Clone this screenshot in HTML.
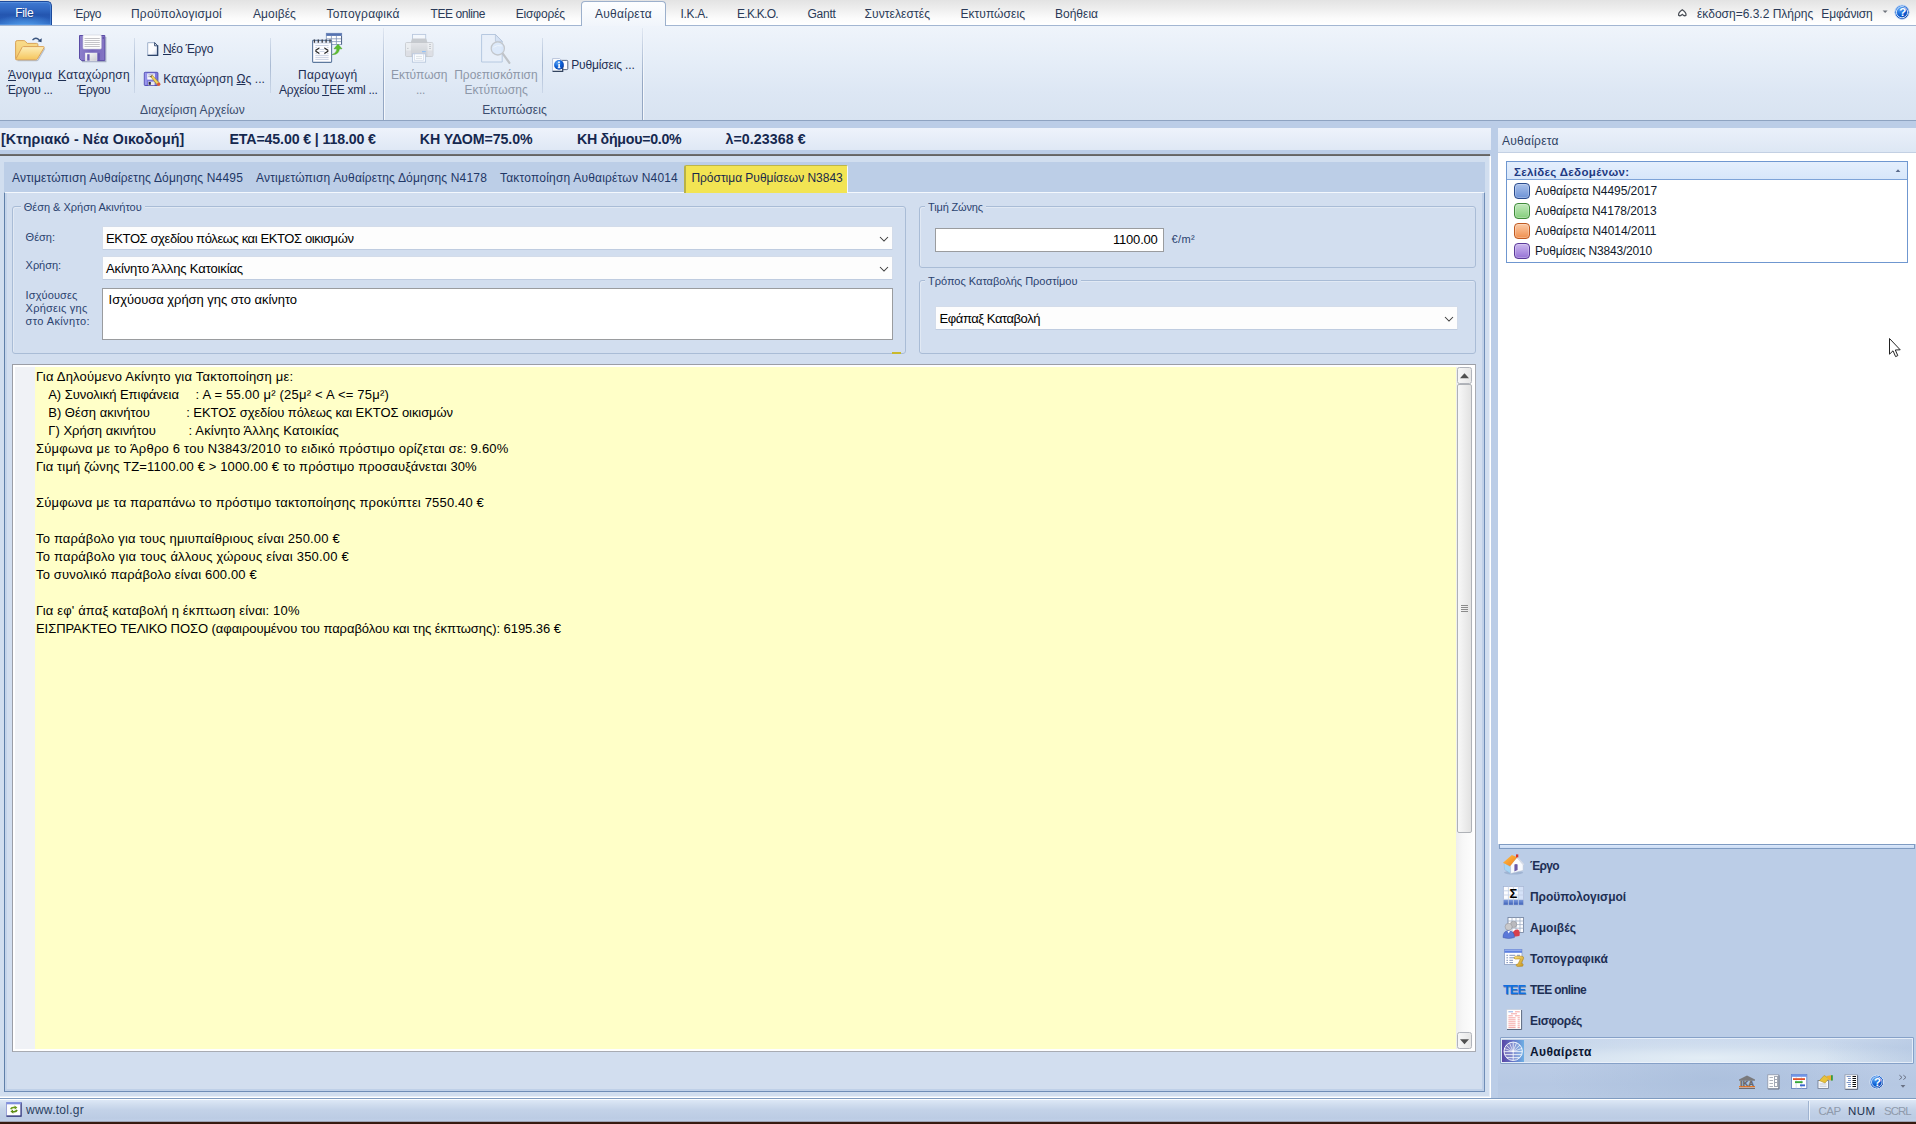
<!DOCTYPE html>
<html lang="el"><head><meta charset="utf-8"><title>Αυθαίρετα</title>
<style>
html,body{margin:0;padding:0;}
body{width:1916px;height:1124px;position:relative;overflow:hidden;background:#bbcde7;font-family:"Liberation Sans",sans-serif;}
.a{position:absolute;box-sizing:border-box;}
.t{position:absolute;white-space:pre;line-height:1;font-family:"Liberation Sans",sans-serif;}
.t u{text-decoration:underline;text-underline-offset:1px;}
svg{position:absolute;overflow:visible;}
/* top tab bar */
#tabbar{left:0;top:0;width:1916px;height:25px;background:linear-gradient(#e3e3e3 0,#ededed 8px,#fbfbfb 18px,#ffffff 24px);}
#filetab{left:-2px;top:1px;width:54px;height:24px;border-radius:0 5px 0 0;border:1px solid #1c4a9c;border-bottom:none;background:radial-gradient(ellipse 70% 60% at 50% 115%,#5aaaf4 0,rgba(90,170,244,0) 100%),linear-gradient(#3f7ad2 0,#2f66c0 35%,#2456b0 55%,#2a62be 100%);box-shadow:inset 0 0 0 1px rgba(110,165,235,.5);}
#acttab{left:581px;top:1px;width:85px;height:25px;border:1px solid #9cb0cc;border-bottom:none;border-radius:4px 4px 0 0;
 background:linear-gradient(#fdfeff,#f1f5fb);}
/* ribbon */
#ribbon{left:0;top:25px;width:1916px;height:96px;border-top:1px solid #a3b6d2;border-bottom:1px solid #8ea3c1;
 background:linear-gradient(#eff4fb 0,#e6eef8 35%,#dde7f4 70%,#d8e3f1 100%);}
.vsep{width:1px;top:38px;height:55px;background:linear-gradient(rgba(160,178,205,.3),#a9bad3 50%,rgba(160,178,205,.3));}
.gsep{width:2px;top:28px;height:92px;background:linear-gradient(90deg,rgba(140,160,190,.9) 0,rgba(140,160,190,.9) 1px,rgba(255,255,255,.7) 1px);
 -webkit-mask-image:linear-gradient(rgba(0,0,0,.15),#000 60%);mask-image:linear-gradient(rgba(0,0,0,.15),#000 60%);}
#strip1{left:0;top:121px;width:1916px;height:7px;background:#bbcde7;}
/* info bar */
#info{left:0;top:128px;width:1491px;height:22px;background:linear-gradient(#eef3fb,#dfe8f5);}
#infoline{left:0;top:154px;width:1490px;height:2px;background:linear-gradient(#727272,#5f5f5f);}
#mainbg{left:0;top:156px;width:1491px;height:942px;background:#d1deef;border-right:1px solid #fff;border-bottom:1px solid #fff;box-shadow:inset -1px -1px 0 #e6edf7;}
#tabstrip{left:4px;top:162px;width:1481px;height:30px;background:#bccee7;}
#page{left:4px;top:192px;width:1481px;height:900px;background:#d2deef;border:1px solid #6f8db6;border-left-color:#5f7fa8;border-top:1px solid #f4f8fd;box-shadow:inset -2px -2px 0 #bfd0e8,inset 2px 0 0 #c4d4ea;}
#ytab{left:684px;top:165px;width:164px;height:28px;border-top:1px solid #bdb548;border-left:2px solid #b9b246;border-right:1px solid #f6f8fc;border-radius:2px 2px 0 0;background:#f2e453;}
.gb{border:1px solid #a9bcd6;border-radius:3px;box-shadow:inset 1px 1px 0 rgba(255,255,255,.35);}
.gbt{height:12px;background:#d2deef;}
.combo{background:#fdfdfd;border:1px solid #d3dcea;border-bottom-color:#bfcce0;border-radius:1px;}
.edit{background:#fff;border:1px solid #9a9c9f;}
#memo{left:12px;top:364px;width:1464px;height:688px;background:#fff;border:1px solid #9b9ea6;border-right-color:#a8abb2;border-bottom-color:#a8abb2;}
#memoin{left:35px;top:367px;width:1421px;height:682px;background:#ffffc8;}
#gutter{left:15px;top:367px;width:20px;height:682px;background:#f0f2f6;}
#vsb{left:1456px;top:367px;width:17px;height:682px;background:linear-gradient(90deg,#eeeeee,#f7f7f7 40%,#fdfdfd);}
.sbb{left:1457px;width:15px;height:17px;border:1px solid #b1b4bb;border-radius:2.5px;background:linear-gradient(90deg,#f7f7f7,#efefef 50%,#e6e6e6);}
#thumb{left:1457px;top:384px;width:15px;height:449px;border:1px solid #aeb1b6;border-radius:2px;background:linear-gradient(90deg,#f8f8f8,#e2e2e2);}
/* right panel */
#rhead{left:1498px;top:128px;width:418px;height:25px;background:linear-gradient(#eaf0fa,#dde7f4);border-bottom:1px solid #c3d0e3;}
#rwhite{left:1498px;top:153px;width:418px;height:691px;background:#fff;}
#lbox{left:1506px;top:161px;width:402px;height:102px;border:1px solid #6f97d0;background:#fff;}
#lhead{left:1507px;top:162px;width:400px;height:18px;background:linear-gradient(#e4effd,#d7e6fa);border-bottom:1px solid #7da3d8;}
.chip{width:16px;height:16px;border-radius:4px;left:1514px;border:1px solid;box-shadow:inset 0 0 0 1px rgba(255,255,255,.25);}
#split{left:1499px;top:844px;width:416px;height:5px;background:linear-gradient(#dbe8fb,#cbdcf4);border:1px solid #7f9bc2;}
#navsel{left:1500px;top:1037px;width:414px;height:27px;border:1px solid #86a1c8;border-radius:1px;background:linear-gradient(90deg,rgba(176,196,224,.55),rgba(176,196,224,0) 22%,rgba(176,196,224,0) 78%,rgba(176,196,224,.55)),radial-gradient(ellipse 55% 80% at 50% 80%,rgba(228,238,246,.95),rgba(228,238,246,0)),linear-gradient(#ccdaee 0,#c3d3e9 40%,#cbdaec 70%,#d3e0ef 100%);box-shadow:inset 0 0 0 1px rgba(236,243,251,.8);}
/* status bar */
#status{left:0;top:1098px;width:1916px;height:24px;background:linear-gradient(#fbfdff 0,#fbfdff 1px,#dde8f6 1px,#cfdcee 6px,#c3d2e8 11px,#bccce4 19px,#c2d2ea 23px);border-top:1px solid #7f9bc0;}
#darkbot{left:0;top:1121px;width:1916px;height:3px;background:linear-gradient(rgba(58,30,20,.25) 0,rgba(58,30,20,.25) 1px,#3a1e14 1px,#33180e 3px);}

</style></head><body>
<div class="a" id="tabbar"></div>
<div class="a" id="ribbon"></div>
<div class="a" id="filetab"></div>
<div class="a" id="acttab"></div>
<div class="a vsep" style="left:134px"></div>
<div class="a vsep" style="left:270px"></div>
<div class="a vsep" style="left:542px"></div>
<div class="a gsep" style="left:383px"></div>
<div class="a gsep" style="left:642px"></div>
<div class="a" id="strip1"></div>
<div class="a" id="info"></div>
<div class="a" id="infoline"></div>
<div class="a" id="mainbg"></div>
<div class="a" id="tabstrip"></div>
<div class="a" id="page"></div>
<div class="a" id="ytab"></div>
<!-- group boxes -->
<div class="a gb" style="left:12px;top:206px;width:894px;height:148px"></div>
<div class="a gbt" style="left:21px;top:201px;width:124px"></div>
<div class="a gb" style="left:919px;top:206px;width:557px;height:62px"></div>
<div class="a gbt" style="left:925px;top:201px;width:61px"></div>
<div class="a gb" style="left:919px;top:280px;width:557px;height:74px"></div>
<div class="a gbt" style="left:925px;top:275px;width:156px"></div>
<div class="a" style="left:892px;top:352px;width:9px;height:2px;background:#c9b92e"></div>
<!-- inputs -->
<div class="a combo" style="left:102px;top:226px;width:791px;height:24px"></div>
<div class="a combo" style="left:102px;top:256px;width:791px;height:24px"></div>
<div class="a edit" style="left:102px;top:288px;width:791px;height:52px"></div>
<div class="a edit" style="left:935px;top:228px;width:229px;height:24px"></div>
<div class="a combo" style="left:935px;top:306px;width:523px;height:24px"></div>
<svg style="left:879px;top:236px" width="10" height="7"><path d="M1 1 L5 5 L9 1" fill="none" stroke="#3a3a3a" stroke-width="1.05"/></svg>
<svg style="left:879px;top:266px" width="10" height="7"><path d="M1 1 L5 5 L9 1" fill="none" stroke="#3a3a3a" stroke-width="1.05"/></svg>
<svg style="left:1444px;top:316px" width="10" height="7"><path d="M1 1 L5 5 L9 1" fill="none" stroke="#3a3a3a" stroke-width="1.05"/></svg>
<!-- memo -->
<div class="a" id="memo"></div>
<div class="a" id="memoin"></div>
<div class="a" id="gutter"></div>
<div class="a" id="vsb"></div>
<div class="a sbb" style="top:367px"></div>
<div class="a" id="thumb"></div>
<div class="a sbb" style="top:1032px"></div>
<svg style="left:1460px;top:373px" width="9" height="6"><path d="M0 5.2 L4.5 0.2 L9 5.2Z" fill="#505050"/></svg>
<svg style="left:1460px;top:1039px" width="9" height="6"><path d="M0 0.2 L4.5 5.2 L9 0.2Z" fill="#505050"/></svg>
<svg style="left:1461px;top:604px" width="7" height="9"><path d="M0 1.5H7M0 3.5H7M0 5.5H7M0 7.5H7" stroke="#8b8b8b" stroke-width="1"/></svg>
<!-- right panel -->
<div class="a" id="rhead"></div>
<div class="a" id="rwhite"></div>
<div class="a" id="lbox"></div>
<div class="a" id="lhead"></div>
<div class="a chip" style="top:183px;border-color:#2b4c8e;background:linear-gradient(#a9c0ea,#6e93d6)"></div>
<div class="a chip" style="top:203px;border-color:#3f8a3a;background:linear-gradient(#c1e8bb,#86cf7d)"></div>
<div class="a chip" style="top:223px;border-color:#bf5a22;background:linear-gradient(#fbc9a4,#f09050)"></div>
<div class="a chip" style="top:243px;border-color:#5a3a9a;background:linear-gradient(#cbb7ee,#9773d6)"></div>
<div class="a" id="split"></div>
<div class="a" style="left:1498px;top:1064px;width:418px;height:34px;background:radial-gradient(ellipse 40% 130% at 52% 45%,rgba(168,189,219,.7),rgba(168,189,219,0)),linear-gradient(#bbcce6,#b6c8e3 60%,#b8cae4)"></div>
<div class="a" id="navsel"></div>
<!-- status bar -->
<div class="a" id="status"></div>
<div class="a" style="left:1808px;top:1101px;width:2px;height:19px;background:linear-gradient(90deg,#9fb3d0 50%,#eaf1fa 50%)"></div>
<div class="a" id="darkbot"></div>
<svg style="left:0;top:0" width="1916" height="1124" viewBox="0 0 1916 1124">
<defs>
<linearGradient id="gFold" x1="0" y1="0" x2="0" y2="1"><stop offset="0" stop-color="#fdeeb8"/><stop offset="1" stop-color="#f5c55c"/></linearGradient>
<linearGradient id="gFoldB" x1="0" y1="0" x2="0" y2="1"><stop offset="0" stop-color="#f9dc8c"/><stop offset="1" stop-color="#f3c96a"/></linearGradient>
<linearGradient id="gFlop" x1="0" y1="0" x2="1" y2="0"><stop offset="0" stop-color="#8d80cc"/><stop offset=".5" stop-color="#7666bb"/><stop offset="1" stop-color="#8475c4"/></linearGradient>
<linearGradient id="gSilver" x1="0" y1="0" x2="1" y2="1"><stop offset="0" stop-color="#fff"/><stop offset="1" stop-color="#c9c9cf"/></linearGradient>
<linearGradient id="gDoc" x1="0" y1="0" x2="1" y2="1"><stop offset="0" stop-color="#fff"/><stop offset=".6" stop-color="#fbfcff"/><stop offset="1" stop-color="#c6d0e6"/></linearGradient>
<radialGradient id="gBall" cx=".35" cy=".3" r=".8"><stop offset="0" stop-color="#5aa2f2"/><stop offset=".5" stop-color="#0c5fd6"/><stop offset="1" stop-color="#0a3c9e"/></radialGradient>
<linearGradient id="gPrn" x1="0" y1="0" x2="0" y2="1"><stop offset="0" stop-color="#e4e6e9"/><stop offset="1" stop-color="#c9ccd1"/></linearGradient>
<linearGradient id="gGlobe" x1="0" y1="0" x2="1" y2="0"><stop offset="0" stop-color="#5a47a6"/><stop offset=".5" stop-color="#6373c6"/><stop offset="1" stop-color="#6fb0e4"/></linearGradient>
<linearGradient id="gRoof" x1="0" y1="0" x2="1" y2="1"><stop offset="0" stop-color="#ffc34a"/><stop offset="1" stop-color="#f07c18"/></linearGradient>
<linearGradient id="gBlueRow" x1="0" y1="0" x2="0" y2="1"><stop offset="0" stop-color="#7c9ade"/><stop offset="1" stop-color="#3f62b8"/></linearGradient>
<linearGradient id="gGold" x1="0" y1="0" x2="1" y2="1"><stop offset="0" stop-color="#fbe27a"/><stop offset="1" stop-color="#c9961e"/></linearGradient>
</defs>

<!-- open folder -->
<g>
<path d="M17.5 60.7 H36.4 Q37.6 60.7 38.2 59.7 L44.8 48.4" fill="none" stroke="#5a6a88" stroke-opacity=".35" stroke-width="1.2"/>
<path d="M15.6 58.2 V42.2 Q15.6 40.6 17.2 40.6 H23.8 Q24.8 40.6 25.5 41.4 L27.2 43.4 H36.6 Q37.9 43.4 37.9 44.7 V47 H24 L16.2 59.5 Z" fill="url(#gFoldB)" stroke="#d9a357" stroke-width="1"/>
<path d="M23.4 46.6 H43.4 Q44.6 46.6 44 47.8 L37.4 58.9 Q36.8 59.8 35.8 59.8 H16.6 Q15.4 59.8 16 58.7 L22 47.4 Q22.5 46.6 23.4 46.6Z" fill="url(#gFold)" stroke="#dba258" stroke-width="1"/>
<path d="M32.5 40.2 Q35.8 36.2 39.6 40.4" fill="none" stroke="#3b5680" stroke-width="1.3"/>
<path d="M41.7 38.2 L41.5 42.3 L37.6 41.2Z" fill="#2f4a75"/>
</g>
<!-- floppy large -->
<g>
<path d="M82 61.6 H105.8 V37" fill="none" stroke="#4a5878" stroke-opacity=".4" stroke-width="1.2"/>
<path d="M79.5 35.5 H104.8 V60.6 H81.5 L79.5 58.6Z" fill="url(#gFlop)" stroke="#5a4ba5" stroke-width="1"/>
<rect x="83" y="35" width="18.3" height="14" rx="1" fill="#fdfdfd" stroke="#cfd0dc" stroke-width=".6"/>
<path d="M84.5 38.5H99.8M84.5 40.5H99.8M84.5 42.5H99.8M84.5 44.5H99.8M84.5 46.5H99.8" stroke="#bdbdc2" stroke-width=".9"/>
<rect x="85.2" y="53" width="11.8" height="8" fill="url(#gSilver)" stroke="#e8e8ee" stroke-width=".5"/>
<rect x="87.2" y="54.2" width="2.4" height="6.4" fill="#6b5cb4"/>
<rect x="97.8" y="53.2" width="2" height="7.2" fill="#6656ae"/>
<rect x="102.6" y="37" width="1.2" height="2" fill="#5d4ea6"/>
</g>
<!-- new doc small -->
<g>
<path d="M147.7 42.7 H154.8 L157.6 45.5 V55.3 H147.7Z" fill="url(#gDoc)" stroke="#9fb0cb" stroke-width="1"/>
<path d="M157.6 45.2 V55.4 H147.6" fill="none" stroke="#2e456b" stroke-width="1.4"/>
<path d="M154.6 42.6 L157.7 45.8 H154.6Z" fill="#e8edf7" stroke="#2e456b" stroke-width=".9"/>
</g>
<!-- save-as small -->
<g>
<rect x="144.3" y="72.3" width="13.6" height="13.2" rx=".8" fill="#7b78dc" stroke="#5450b4" stroke-width="1"/>
<rect x="144.8" y="72.8" width="2" height="12" fill="#a29ff0" opacity=".8"/>
<rect x="147.2" y="73.4" width="7.6" height="6.2" fill="#fbfbff"/>
<path d="M148.3 74.9H153.6M148.3 76.7H152.2" stroke="#8a8aa8" stroke-width=".8"/>
<rect x="148" y="81.6" width="6.6" height="3.6" fill="#e9e9f2"/>
<rect x="148.6" y="82" width="2.2" height="2.8" fill="#2a2a3c"/>
<path d="M150.6 76.4 L152.2 75.2 L159.6 83.2 L157.4 85.2 Z" fill="#f2d35a" stroke="#9a7a1c" stroke-width=".6"/>
<path d="M150.3 76.2 L152 75.4 L151 77.4Z" fill="#3a3a3a"/>
<circle cx="158.7" cy="84.3" r="1.7" fill="#d9583c"/>
</g>
<!-- xml notepad + table -->
<g>
<rect x="326.3" y="33.3" width="15.4" height="11.2" fill="#fff" stroke="#7e93b7" stroke-width=".8"/>
<rect x="326.3" y="33.3" width="15.4" height="2.6" fill="#5573b1"/>
<path d="M331.4 35.9V44.5M336.4 35.9V44.5M326.3 38.8H341.7M326.3 41.6H341.7" stroke="#8194b6" stroke-width=".8"/>
<rect x="341" y="36" width="1" height="8.5" fill="#56688c"/>
<rect x="312.6" y="40.4" width="19" height="22" rx=".8" fill="#fdfdff" stroke="#5d799e" stroke-width="1.1"/>
<rect x="313.1" y="40.9" width="18" height="3" fill="#dfe6f2"/>
<path d="M314.4 39.4v3.4M318.3 39.4v3.4M322.2 39.4v3.4M326.1 39.4v3.4M330 39.4v3.4" stroke="#3c3c44" stroke-width="1.3"/>
<path d="M315.4 45.5H328.6M315.4 55.4H328.6M315.4 57.4H328.6M315.4 59.4H328.6" stroke="#bcc7dc" stroke-width=".8"/>
<path d="M315.4 47.5H317M327 47.5H328.6M319.5 49.5H324.4M319.5 51.5H324.4M315.4 53.5H317M327 53.5H328.6" stroke="#c3cde0" stroke-width=".8"/>
<path d="M332.2 54.6 Q336.6 53.4 337 48.8 L334 48.8 L338 44.2 L342 48.8 L339.4 48.8 Q339 54.8 332.2 54.6Z" fill="#5cbf2c" stroke="#3f9c1c" stroke-width=".5"/>
</g>
<!-- printer (disabled) -->
<g opacity=".95">
<rect x="412.5" y="34.4" width="13.2" height="9" fill="#f4f8fd" stroke="#b7c6dc" stroke-width=".9"/>
<path d="M410.6 43 L412 38.5 H426.2 L427.6 43Z" fill="#c5c8cd"/>
<rect x="405.5" y="42.5" width="27.4" height="14" rx="1.2" fill="url(#gPrn)" stroke="#c0c3c8" stroke-width=".8"/>
<rect x="405.9" y="42.9" width="5" height="13.2" fill="#eceef1"/>
<rect x="427.5" y="42.9" width="5" height="13.2" fill="#eceef1"/>
<rect x="405.9" y="50.5" width="26.6" height="5.6" fill="#d2d4d8" opacity=".55"/>
<rect x="422" y="51" width="3.8" height="1.2" fill="#8fbff5"/>
<path d="M429 44.5h2M429 46.5h2M429 48.5h2M407 48.4h1.6" stroke="#b6b9be" stroke-width=".7"/>
<rect x="412.4" y="53.8" width="13.2" height="8.4" fill="#f8fbff" stroke="#b7c6dc" stroke-width=".9"/>
<rect x="414.6" y="54" width="8.8" height="6.2" fill="#fdfeff" stroke="#c8d3e4" stroke-width=".6"/>
<path d="M416 56.4H422M416 58.4H422" stroke="#cfd4dc" stroke-width=".7"/>
</g>
<!-- preview (disabled) -->
<g>
<path d="M481.6 34.5 H495.4 L502.2 41.4 V62 H481.6Z" fill="#e8eff9" stroke="#b6c8e0" stroke-width="1"/>
<path d="M495.4 34.5 L502.2 41.4 H495.4Z" fill="#d5e2f4" stroke="#aab9cf" stroke-width=".6"/>
<path d="M502.6 53.4 L509.4 62.8" stroke="#bfc3c8" stroke-width="2.2" stroke-linecap="round"/>
<circle cx="497.8" cy="48.4" r="6.6" fill="#d9e8fa" fill-opacity=".85" stroke="#c3c7cc" stroke-width="1.3"/>
<path d="M493.4 47.4 Q497 44.4 502.4 46" stroke="#eef5fd" stroke-width="1" fill="none"/>
</g>
<!-- settings info -->
<g>
<rect x="558" y="60.4" width="9.8" height="9.2" rx="1" fill="#fdfdff" stroke="#4a5a74" stroke-width=".9"/>
<path d="M552.6 58.6 H559.6 L562.6 61.4 V71.3 H552.6Z" fill="#fff" stroke="#aab6d2" stroke-width=".8"/>
<path d="M552.6 71.4 H562.7 V66" fill="none" stroke="#33445f" stroke-width="1.2"/>
<circle cx="559" cy="64.9" r="4.9" fill="url(#gBall)"/>
<rect x="558.3" y="63.9" width="1.6" height="4" fill="#fff"/><rect x="557.7" y="67.3" width="2.8" height=".9" fill="#fff"/>
<circle cx="559" cy="62.2" r=".95" fill="#fff"/>
</g>
<!-- tab bar right icons -->
<g>
<path d="M1678.6 15.2 Q1678.2 12.4 1682.3 9.8 Q1686.4 12.4 1686 15.2 Q1684.4 16.6 1682.3 14.4 Q1680.2 16.6 1678.6 15.2Z" fill="#fff" stroke="#4a4f57" stroke-width="1.3"/>
<path d="M1882.6 10.4 H1887.6 L1885.1 13Z" fill="#6f747c"/>
<circle cx="1902" cy="12.2" r="7.2" fill="url(#gBall)" stroke="#c9dcf6" stroke-width="1"/>
<circle cx="1902" cy="12.2" r="5.6" fill="none" stroke="#e8f1fd" stroke-width=".9"/>
</g>
<!-- status bar icon -->
<g>
<rect x="6.5" y="1102.5" width="14.6" height="13.6" fill="#fdfdfd" stroke="#9aa3d8" stroke-width="1"/><path d="M21.1 1102.5 V1116.1 H6.5" fill="none" stroke="#2b2f72" stroke-width="1.1"/>
<rect x="6.5" y="1102.3" width="14.6" height="2" fill="#7f8fe0"/>
<path d="M10 1109 Q11 1106 14.6 1106.8 L14.4 1105.4 L17.4 1107.6 L14.8 1109.6 L14.7 1108.3 Q12.4 1107.8 11.6 1109.6Z" fill="#6a9a1c"/>
<path d="M17.8 1110.2 Q16.8 1113.2 13.2 1112.4 L13.4 1113.8 L10.4 1111.6 L13 1109.6 L13.1 1110.9 Q15.4 1111.4 16.2 1109.6Z" fill="#5d8d12"/>
</g>
<!-- nav: house -->
<g>
<ellipse cx="1513.6" cy="872.6" rx="9.6" ry="2" fill="#6f86ad" opacity=".35"/>
<path d="M1504 862.4 L1510.6 867.2 V873.6 L1504.6 869.6Z" fill="#a8d6f5" stroke="#8db9dc" stroke-width=".5"/>
<path d="M1510.6 873.6 V865 L1516.9 857.6 L1523.2 864.6 V870.4 Z" fill="#f9fbfe" stroke="#b7c2d6" stroke-width=".6"/>
<path d="M1516.9 857 L1523.8 864.8" stroke="#d8dde8" stroke-width="1.3"/>
<path d="M1503 862.8 L1511.9 855 L1517.2 857.2 L1510 866.2 Z" fill="url(#gRoof)"/>
<rect x="1516" y="854.4" width="2.3" height="3" fill="#d8352a"/>
<path d="M1514.4 871.6 V864.6 Q1516 863.4 1517.6 864.6 V870Z" fill="#6a5aa8"/>
</g>
<!-- nav: sigma grid -->
<g>
<rect x="1503.3" y="886.5" width="20.2" height="18.4" fill="#fdfdff" stroke="#9fb0cf" stroke-width=".7"/>
<rect x="1518.6" y="887" width="4.6" height="12.5" fill="#d5e2f8"/>
<rect x="1503.6" y="899.6" width="19.6" height="5.2" fill="url(#gBlueRow)"/>
<path d="M1508.4 886.5V905M1513.4 886.5V905M1518.4 886.5V905M1503.3 890.8H1523.5M1503.3 895H1523.5M1503.3 899.4H1523.5" stroke="#c3cfe6" stroke-width=".8"/>
</g>
<!-- nav: people + grid -->
<g>
<rect x="1508" y="917.6" width="15.6" height="15" fill="#fdfdff" stroke="#6f7f9c" stroke-width=".8"/>
<path d="M1512 917.6V932M1516 917.6V932M1520 917.6V932M1508 921H1523.6M1508 924.6H1523.6M1508 928.2H1523.6" stroke="#97a6c0" stroke-width=".7"/>
<circle cx="1513.6" cy="924.4" r="3.2" fill="#b9b9bd" stroke="#8d8d92" stroke-width=".5"/>
<path d="M1512 937 Q1512 929 1518 929.4 Q1520.6 931 1519.4 936Z" fill="#d8404c"/>
<circle cx="1508.6" cy="926.8" r="3.5" fill="#c9c9cc" stroke="#8d8d92" stroke-width=".5"/>
<path d="M1503 937.6 Q1503 930.6 1508.6 930.8 Q1514.4 930.6 1514.4 937.6 Q1508.6 939.4 1503 937.6Z" fill="#5b78d8" stroke="#3c55a8" stroke-width=".5"/>
<path d="M1507.4 931 L1508.7 933.4 L1510 931Z" fill="#fff"/>
</g>
<!-- nav: topo -->
<g>
<rect x="1504.4" y="949.4" width="17.6" height="15" fill="#fdfdff" stroke="#8ea0c4" stroke-width=".8"/>
<rect x="1504.4" y="949.4" width="17.6" height="3.4" fill="#5c80e0"/>
<rect x="1504.8" y="949.8" width="16.8" height="1" fill="#9db5f2"/>
<path d="M1506.4 955.3H1508M1509.4 955.3H1515.2M1517 955.3H1520M1506.4 957.8H1508M1509.4 957.8H1515.2M1506.4 960.3H1508M1509.4 960.3H1513M1506.4 962.6H1508M1509.4 962.6H1513" stroke="#7388b4" stroke-width=".9"/>
<path d="M1514.4 957 Q1513.2 958.4 1515.2 959 L1520.4 959 L1518 964 Q1516.2 964 1516 965.2 Q1516.4 966.6 1518.2 966.4 L1522.6 966.2 Q1524 964.6 1522.4 963.6 L1521.2 963.6 L1523.6 958.4 Q1524 956.4 1522 956.2 L1516.4 956.2 Q1515 956.2 1514.4 957Z" fill="url(#gGold)" stroke="#a87a12" stroke-width=".5"/>
</g>
<!-- nav: doc with red lines -->
<g>
<rect x="1506.8" y="1009.6" width="14.6" height="19.6" fill="#fff" stroke="#c6ccd8" stroke-width=".6"/>
<path d="M1521.6 1010 V1029.5 H1507" fill="none" stroke="#5d6a80" stroke-width="1"/>
<path d="M1508.4 1011.8H1513" stroke="#7fa0e0" stroke-width=".9"/>
<path d="M1515 1011.8H1519.8M1511 1013.8H1517M1508.4 1015.8H1512.8M1515 1015.8H1519.8M1508.4 1017.8H1515.6M1517.6 1017.8H1519.8M1508.4 1019.8H1515.6M1517.6 1019.8H1519.8M1508.4 1021.8H1515.6M1517.6 1021.8H1519.8M1508.4 1023.8H1515.6M1517.6 1023.8H1519.8M1508.4 1025.8H1515.6M1517.6 1025.8H1519.8M1508.4 1027.6H1515.6M1517.6 1027.6H1519.8" stroke="#f39a98" stroke-width=".9"/>
</g>
<!-- nav: globe selected -->
<g>
<rect x="1502" y="1040" width="22" height="22" fill="url(#gGlobe)"/>
<circle cx="1513.2" cy="1051.3" r="9.2" fill="#fff" fill-opacity=".2" stroke="#f4f8fd" stroke-width=".95"/>
<path d="M1504 1051.6H1522.4M1513.2 1042.2V1060.4M1504.8 1054.6H1521.6M1506.6 1057.6H1519.8" stroke="#f4f8fd" stroke-width=".9" fill="none" opacity=".95"/>
<path d="M1513 1051.6 L1506 1045M1513 1051.6 L1509.4 1042.8M1513 1051.6 L1516.6 1042.8M1513 1051.6 L1520 1045M1513 1051.6 L1522 1048.4M1513 1051.6 L1504 1048.4" stroke="#fff" stroke-width=".8" opacity=".85"/>
</g>
<!-- nav bottom toolbar -->
<g>
<path d="M1739 1079.6 L1747 1075.6 L1755 1079.6 V1080.8 H1739Z" fill="#7a7a7c"/>
<rect x="1739" y="1086" width="16" height="1.3" fill="#f07820"/>
<rect x="1739" y="1088" width="16" height="1" fill="#6c6c6e"/>
<rect x="1767.8" y="1074.8" width="11" height="14" fill="#fdfdfd" stroke="#8d96a8" stroke-width=".8"/>
<path d="M1779 1075.4V1089H1768.2" fill="none" stroke="#6c7486" stroke-width=".9"/>
<path d="M1769.5 1077.5H1773M1769.5 1080.5H1773M1769.5 1083.5H1773M1769.5 1086.5H1773" stroke="#aeb3bd" stroke-width="1"/>
<rect x="1774.5" y="1076.5" width="3" height="10" fill="none" stroke="#a2a8b4" stroke-width="1"/><path d="M1774.5 1079.5H1777.5M1774.5 1082.5H1777.5" stroke="#a2a8b4" stroke-width="1"/>
<rect x="1791.4" y="1074.4" width="15.4" height="14" fill="#fdfdfd" stroke="#5a78b8" stroke-width=".8"/>
<rect x="1791.4" y="1074.4" width="15.4" height="2.4" fill="#6f95e8"/>
<path d="M1796.2 1077V1088.4M1801.4 1077V1088.4" stroke="#c9d3e8" stroke-width=".7"/>
<rect x="1793" y="1078.2" width="12" height="1.8" fill="#e2522a"/>
<rect x="1795" y="1081.2" width="7.6" height="1.9" fill="#35a838"/>
<rect x="1800" y="1084.4" width="5" height="1.9" fill="#3b66d0"/>
<rect x="1818" y="1080.4" width="10.6" height="8.2" fill="#f4f6fb" stroke="#6c7890" stroke-width=".8"/>
<path d="M1819.6 1084H1826.6M1819.6 1086.2H1826.6" stroke="#aab3c6" stroke-width=".7"/>
<path d="M1819.4 1080.6 L1824.2 1075.4 L1829 1078.6 L1825 1083Z" fill="#e8c23a" stroke="#a8861a" stroke-width=".5"/>
<path d="M1826.4 1076 L1831 1075.2 L1832.4 1080 L1829.4 1080.4Z" fill="#f0b030"/>
<rect x="1831" y="1075.2" width="1.8" height="5.4" fill="#3a9a3c"/>
<rect x="1845" y="1074.8" width="12.4" height="14.4" fill="#fdfdfd" stroke="#8d96a8" stroke-width=".8"/>
<path d="M1857.6 1075.4V1089.4H1845.4" fill="none" stroke="#5a6378" stroke-width=".9"/>
<path d="M1846.6 1076.5H1851M1848 1078.5H1851M1848 1080.5H1851M1846.6 1082.5H1851M1848 1084.5H1851M1848 1086.5H1851" stroke="#7d96c8" stroke-width="1"/>
<path d="M1852.5 1076.5H1856M1852.5 1078.5H1856M1852.5 1080.5H1856M1852.5 1082.5H1856M1852.5 1084.5H1856M1852.5 1086.5H1856" stroke="#0a0a0a" stroke-width="1"/>
<circle cx="1876.8" cy="1082" r="6.9" fill="url(#gBall)" stroke="#dbe8fa" stroke-width="1"/>
<circle cx="1876.8" cy="1082" r="5.3" fill="none" stroke="#eef4fd" stroke-width=".8"/>
<path d="M1899.4 1075.2 L1902 1077.4 L1899.4 1079.6M1903.4 1075.2 L1906 1077.4 L1903.4 1079.6" fill="none" stroke="#697184" stroke-width="1"/>
<path d="M1900.6 1085 H1905.4 L1903 1087.8Z" fill="#697184"/>
</g>
<!-- list header arrow -->
<path d="M1895.6 172 H1900.4 L1898 169.2Z" fill="#5a6a8a"/>
<!-- mouse cursor -->
<path d="M1889.5 338.5 V354.2 L1893 350.8 L1895.6 356.6 L1897.8 355.6 L1895.3 350 L1900.2 349.8Z" fill="#fff" stroke="#222" stroke-width="1"/>
</svg>


<div id="txt">
<span class="t" id="t0" style="left:15.2px;top:7.00px;font-size:12px;color:#ffffff;letter-spacing:-0.286px;text-shadow:0 1px 1px rgba(10,30,90,.6);">File</span>
<span class="t" id="t1" style="left:74.0px;top:8.00px;font-size:12px;color:#2b3b58;letter-spacing:-0.480px;">Έργο</span>
<span class="t" id="t2" style="left:131.0px;top:8.00px;font-size:12px;color:#2b3b58;letter-spacing:0.206px;">Προϋπολογισμοί</span>
<span class="t" id="t3" style="left:253.0px;top:8.00px;font-size:12px;color:#2b3b58;letter-spacing:0.100px;">Αμοιβές</span>
<span class="t" id="t4" style="left:326.5px;top:8.00px;font-size:12px;color:#2b3b58;letter-spacing:0.253px;">Τοπογραφικά</span>
<span class="t" id="t5" style="left:430.6px;top:8.00px;font-size:12px;color:#2b3b58;letter-spacing:-0.430px;">TEE online</span>
<span class="t" id="t6" style="left:515.7px;top:8.00px;font-size:12px;color:#2b3b58;letter-spacing:-0.150px;">Εισφορές</span>
<span class="t" id="t7" style="left:595.0px;top:8.00px;font-size:12px;color:#2b3b58;letter-spacing:0.274px;">Αυθαίρετα</span>
<span class="t" id="t8" style="left:680.6px;top:8.00px;font-size:12px;color:#2b3b58;letter-spacing:-0.324px;">Ι.Κ.Α.</span>
<span class="t" id="t9" style="left:737.0px;top:8.00px;font-size:12px;color:#2b3b58;letter-spacing:-0.711px;">Ε.Κ.Κ.Ο.</span>
<span class="t" id="t10" style="left:807.4px;top:8.00px;font-size:12px;color:#2b3b58;letter-spacing:-0.212px;">Gantt</span>
<span class="t" id="t11" style="left:864.6px;top:8.00px;font-size:12px;color:#2b3b58;letter-spacing:0.063px;">Συντελεστές</span>
<span class="t" id="t12" style="left:960.4px;top:8.00px;font-size:12px;color:#2b3b58;letter-spacing:0.060px;">Εκτυπώσεις</span>
<span class="t" id="t13" style="left:1055.0px;top:8.00px;font-size:12px;color:#2b3b58;letter-spacing:0.002px;">Βοήθεια</span>
<span class="t" id="t14" style="left:1697.0px;top:8.00px;font-size:12px;color:#2b3b58;">έκδοση=6.3.2 Πλήρης</span>
<span class="t" id="t15" style="left:1821.3px;top:8.00px;font-size:12px;color:#2b3b58;letter-spacing:-0.136px;">Εμφάνιση</span>
<span class="t" id="t16" style="left:8.0px;top:69.00px;font-size:12px;color:#1e2f54;letter-spacing:0.143px;"><u>Ά</u>νοιγμα</span>
<span class="t" id="t17" style="left:6.4px;top:84.00px;font-size:12px;color:#1e2f54;letter-spacing:-0.290px;">Έργου ...</span>
<span class="t" id="t18" style="left:58.0px;top:69.00px;font-size:12px;color:#1e2f54;letter-spacing:0.277px;"><u>Κ</u>αταχώρηση</span>
<span class="t" id="t19" style="left:77.0px;top:84.00px;font-size:12px;color:#1e2f54;letter-spacing:-0.497px;">Έργου</span>
<span class="t" id="t20" style="left:163.0px;top:43.00px;font-size:12px;color:#1e2f54;letter-spacing:-0.369px;"><u>Ν</u>έο Έργο</span>
<span class="t" id="t21" style="left:163.3px;top:73.00px;font-size:12px;color:#1e2f54;letter-spacing:0.060px;">Καταχώρηση <u>Ω</u>ς ...</span>
<span class="t" id="t22" style="left:298.0px;top:69.00px;font-size:12px;color:#1e2f54;letter-spacing:0.260px;">Παραγωγή</span>
<span class="t" id="t23" style="left:279.0px;top:84.00px;font-size:12px;color:#1e2f54;letter-spacing:-0.299px;">Αρχείου <u>Τ</u>ΕΕ xml ...</span>
<span class="t" id="t24" style="left:391.0px;top:69.00px;font-size:12px;color:#8d97a8;letter-spacing:-0.047px;">Εκτύπωση</span>
<span class="t" id="t25" style="left:416.0px;top:84.00px;font-size:12px;color:#8d97a8;letter-spacing:-0.339px;">...</span>
<span class="t" id="t26" style="left:454.2px;top:69.00px;font-size:12px;color:#8d97a8;letter-spacing:0.019px;">Προεπισκόπιση</span>
<span class="t" id="t27" style="left:464.4px;top:84.00px;font-size:12px;color:#8d97a8;letter-spacing:0.105px;">Εκτύπωσης</span>
<span class="t" id="t28" style="left:571.2px;top:59.00px;font-size:12px;color:#1e2f54;letter-spacing:-0.144px;">Ρυθμίσεις ...</span>
<span class="t" id="t29" style="left:140.0px;top:104.00px;font-size:12px;color:#3a4d6e;letter-spacing:0.128px;">Διαχείριση Αρχείων</span>
<span class="t" id="t30" style="left:482.3px;top:104.00px;font-size:12px;color:#3a4d6e;letter-spacing:0.050px;">Εκτυπώσεις</span>
<span class="t" id="t31" style="left:1.0px;top:132.00px;font-size:14.2px;color:#15284f;font-weight:bold;letter-spacing:0.142px;">[Κτηριακό - Νέα Οικοδομή]</span>
<span class="t" id="t32" style="left:229.5px;top:132.00px;font-size:14.2px;color:#15284f;font-weight:bold;letter-spacing:-0.134px;">ΕΤΑ=45.00 € | 118.00 €</span>
<span class="t" id="t33" style="left:419.8px;top:132.00px;font-size:14.2px;color:#15284f;font-weight:bold;letter-spacing:-0.057px;">ΚΗ ΥΔΟΜ=75.0%</span>
<span class="t" id="t34" style="left:577.0px;top:132.00px;font-size:14.2px;color:#15284f;font-weight:bold;letter-spacing:-0.272px;">ΚΗ δήμου=0.0%</span>
<span class="t" id="t35" style="left:725.5px;top:132.00px;font-size:14.2px;color:#15284f;font-weight:bold;letter-spacing:0.073px;">λ=0.23368 €</span>
<span class="t" id="t36" style="left:12.0px;top:172.00px;font-size:12px;color:#1f3766;letter-spacing:0.171px;">Αντιμετώπιση Αυθαίρετης Δόμησης Ν4495</span>
<span class="t" id="t37" style="left:256.0px;top:172.00px;font-size:12px;color:#1f3766;letter-spacing:0.171px;">Αντιμετώπιση Αυθαίρετης Δόμησης Ν4178</span>
<span class="t" id="t38" style="left:500.0px;top:172.00px;font-size:12px;color:#1f3766;letter-spacing:0.194px;">Τακτοποίηση Αυθαιρέτων Ν4014</span>
<span class="t" id="t39" style="left:691.4px;top:172.00px;font-size:12px;color:#1a2a4a;letter-spacing:-0.021px;">Πρόστιμα Ρυθμίσεων Ν3843</span>
<span class="t" id="t40" style="left:23.7px;top:202.00px;font-size:11px;color:#2b4370;letter-spacing:-0.005px;">Θέση &amp; Χρήση Ακινήτου</span>
<span class="t" id="t41" style="left:25.6px;top:232.00px;font-size:11px;color:#2b4370;letter-spacing:-0.008px;">Θέση:</span>
<span class="t" id="t42" style="left:25.6px;top:260.00px;font-size:11px;color:#2b4370;letter-spacing:-0.048px;">Χρήση:</span>
<span class="t" id="t43" style="left:25.6px;top:290.00px;font-size:11px;color:#2b4370;letter-spacing:0.126px;">Ισχύουσες</span>
<span class="t" id="t44" style="left:25.6px;top:303.00px;font-size:11px;color:#2b4370;letter-spacing:0.252px;">Χρήσεις γης</span>
<span class="t" id="t45" style="left:25.6px;top:316.00px;font-size:11px;color:#2b4370;letter-spacing:0.382px;">στο Ακίνητο:</span>
<span class="t" id="t46" style="left:106.0px;top:232.00px;font-size:13px;color:#000;letter-spacing:-0.388px;">ΕΚΤΟΣ σχεδίου πόλεως και ΕΚΤΟΣ οικισμών</span>
<span class="t" id="t47" style="left:106.0px;top:262.00px;font-size:13px;color:#000;letter-spacing:-0.127px;">Ακίνητο Άλλης Κατοικίας</span>
<span class="t" id="t48" style="left:108.6px;top:293.00px;font-size:13px;color:#000;letter-spacing:-0.041px;">Ισχύουσα χρήση γης στο ακίνητο</span>
<span class="t" id="t49" style="left:928.0px;top:202.00px;font-size:11px;color:#2b4370;letter-spacing:-0.150px;">Τιμή Ζώνης</span>
<span class="t" id="t50" style="left:1113.0px;top:233.00px;font-size:13px;color:#000;letter-spacing:-0.204px;">1100.00</span>
<span class="t" id="t51" style="left:1171.6px;top:234.00px;font-size:11px;color:#2b4370;letter-spacing:0.350px;">€/m²</span>
<span class="t" id="t52" style="left:928.0px;top:276.00px;font-size:11px;color:#2b4370;letter-spacing:-0.002px;">Τρόπος Καταβολής Προστίμου</span>
<span class="t" id="t53" style="left:939.6px;top:312.00px;font-size:13px;color:#000;letter-spacing:-0.443px;">Εφάπαξ Καταβολή</span>
<span class="t" id="t54" style="left:36.0px;top:370.00px;font-size:13px;color:#000;letter-spacing:0.213px;">Για Δηλούμενο Ακίνητο για Τακτοποίηση με:</span>
<span class="t" id="t55" style="left:48.2px;top:388.00px;font-size:13px;color:#000;letter-spacing:-0.017px;">Α) Συνολική Επιφάνεια</span>
<span class="t" id="t56" style="left:195.5px;top:388.00px;font-size:13px;color:#000;letter-spacing:0.211px;">: Α = 55.00 μ² (25μ² &lt; Α &lt;= 75μ²)</span>
<span class="t" id="t57" style="left:48.2px;top:406.00px;font-size:13px;color:#000;letter-spacing:0.018px;">Β) Θέση ακινήτου</span>
<span class="t" id="t58" style="left:186.3px;top:406.00px;font-size:13px;color:#000;letter-spacing:-0.077px;">: ΕΚΤΟΣ σχεδίου πόλεως και ΕΚΤΟΣ οικισμών</span>
<span class="t" id="t59" style="left:48.2px;top:424.00px;font-size:13px;color:#000;letter-spacing:0.036px;">Γ) Χρήση ακινήτου</span>
<span class="t" id="t60" style="left:188.5px;top:424.00px;font-size:13px;color:#000;letter-spacing:0.163px;">: Ακίνητο Άλλης Κατοικίας</span>
<span class="t" id="t61" style="left:36.0px;top:442.00px;font-size:13px;color:#000;letter-spacing:0.221px;">Σύμφωνα με το Άρθρο 6 του Ν3843/2010 το ειδικό πρόστιμο ορίζεται σε: 9.60%</span>
<span class="t" id="t62" style="left:36.0px;top:460.00px;font-size:13px;color:#000;letter-spacing:0.124px;">Για τιμή ζώνης ΤΖ=1100.00 € &gt; 1000.00 € το πρόστιμο προσαυξάνεται 30%</span>
<span class="t" id="t63" style="left:36.0px;top:496.00px;font-size:13px;color:#000;letter-spacing:0.164px;">Σύμφωνα με τα παραπάνω το πρόστιμο τακτοποίησης προκύπτει 7550.40 €</span>
<span class="t" id="t64" style="left:36.0px;top:532.00px;font-size:13px;color:#000;letter-spacing:0.174px;">Το παράβολο για τους ημιυπαίθριους είναι 250.00 €</span>
<span class="t" id="t65" style="left:36.0px;top:550.00px;font-size:13px;color:#000;letter-spacing:0.216px;">Το παράβολο για τους άλλους χώρους είναι 350.00 €</span>
<span class="t" id="t66" style="left:36.0px;top:568.00px;font-size:13px;color:#000;letter-spacing:0.164px;">Το συνολικό παράβολο είναι 600.00 €</span>
<span class="t" id="t67" style="left:36.0px;top:604.00px;font-size:13px;color:#000;letter-spacing:0.152px;">Για εφ' άπαξ καταβολή η έκπτωση είναι: 10%</span>
<span class="t" id="t68" style="left:36.0px;top:622.00px;font-size:13px;color:#000;letter-spacing:-0.064px;">ΕΙΣΠΡΑΚΤΕΟ ΤΕΛΙΚΟ ΠΟΣΟ (αφαιρουμένου του παραβόλου και της έκπτωσης): 6195.36 €</span>
<span class="t" id="t69" style="left:1502.0px;top:135.00px;font-size:12px;color:#2f4263;letter-spacing:0.252px;">Αυθαίρετα</span>
<span class="t" id="t70" style="left:1514.0px;top:167.00px;font-size:11.5px;color:#1f3a82;font-weight:bold;letter-spacing:0.327px;">Σελίδες Δεδομένων:</span>
<span class="t" id="t71" style="left:1535.0px;top:185.00px;font-size:12px;color:#111a2c;letter-spacing:-0.063px;">Αυθαίρετα Ν4495/2017</span>
<span class="t" id="t72" style="left:1535.0px;top:205.00px;font-size:12px;color:#111a2c;letter-spacing:-0.088px;">Αυθαίρετα Ν4178/2013</span>
<span class="t" id="t73" style="left:1535.0px;top:225.00px;font-size:12px;color:#111a2c;letter-spacing:-0.044px;">Αυθαίρετα Ν4014/2011</span>
<span class="t" id="t74" style="left:1535.0px;top:245.00px;font-size:12px;color:#111a2c;letter-spacing:-0.188px;">Ρυθμίσεις Ν3843/2010</span>
<span class="t" id="t75" style="left:1530.0px;top:860.00px;font-size:12px;color:#1e2f54;font-weight:bold;letter-spacing:-0.668px;">Έργο</span>
<span class="t" id="t76" style="left:1530.0px;top:891.00px;font-size:12px;color:#1e2f54;font-weight:bold;letter-spacing:-0.048px;">Προϋπολογισμοί</span>
<span class="t" id="t77" style="left:1530.0px;top:922.00px;font-size:12px;color:#1e2f54;font-weight:bold;letter-spacing:0.049px;">Αμοιβές</span>
<span class="t" id="t78" style="left:1530.0px;top:953.00px;font-size:12px;color:#1e2f54;font-weight:bold;letter-spacing:0.119px;">Τοπογραφικά</span>
<span class="t" id="t79" style="left:1530.0px;top:984.00px;font-size:12px;color:#1e2f54;font-weight:bold;letter-spacing:-0.602px;">TEE online</span>
<span class="t" id="t80" style="left:1530.0px;top:1015.00px;font-size:12px;color:#1e2f54;font-weight:bold;letter-spacing:-0.318px;">Εισφορές</span>
<span class="t" id="t81" style="left:1530.0px;top:1046.00px;font-size:12px;color:#0b1733;font-weight:bold;letter-spacing:0.369px;">Αυθαίρετα</span>
<span class="t" id="t82" style="left:26.0px;top:1104.00px;font-size:12px;color:#2b3f5f;letter-spacing:0.264px;">www.tol.gr</span>
<span class="t" id="t83" style="left:1818.6px;top:1106.00px;font-size:11.5px;color:#8f9aab;letter-spacing:-0.585px;">CAP</span>
<span class="t" id="t84" style="left:1848.0px;top:1106.00px;font-size:11.5px;color:#26344f;letter-spacing:0.466px;">NUM</span>
<span class="t" id="t85" style="left:1884.0px;top:1106.00px;font-size:11.5px;color:#8f9aab;letter-spacing:-1.000px;">SCRL</span>
<span class="t" id="t86" style="left:1509.4px;top:887.00px;font-size:13px;color:#000;font-weight:bold;">Σ</span>
<span class="t" id="t87" style="left:1899.2px;top:7.00px;font-size:11.5px;color:#fff;font-weight:bold;">?</span>
<span class="t" id="t88" style="left:1874.0px;top:1077.00px;font-size:11.5px;color:#fff;font-weight:bold;">?</span>
<span class="t" id="t89" style="left:1740.2px;top:1080.00px;font-size:7.5px;color:#666668;font-weight:bold;letter-spacing:0.426px;-webkit-text-stroke:.35px #666668;">IKA</span>
<span class="t" id="t90" style="left:1503.0px;top:983.00px;font-size:13px;color:#0f6fe0;font-weight:bold;letter-spacing:-1.099px;text-shadow:0.5px 0.8px 0.6px rgba(40,60,110,.55);">TEE</span>
<span class="t" id="t91" style="left:315.0px;top:44.00px;font-size:13px;color:#2a2a2a;font-weight:bold;transform:scaleX(.62);transform-origin:0 0;">&lt;</span>
<span class="t" id="t92" style="left:324.2px;top:44.00px;font-size:13px;color:#2a2a2a;font-weight:bold;transform:scaleX(.62);transform-origin:0 0;">&gt;</span>
</div>
</body></html>
